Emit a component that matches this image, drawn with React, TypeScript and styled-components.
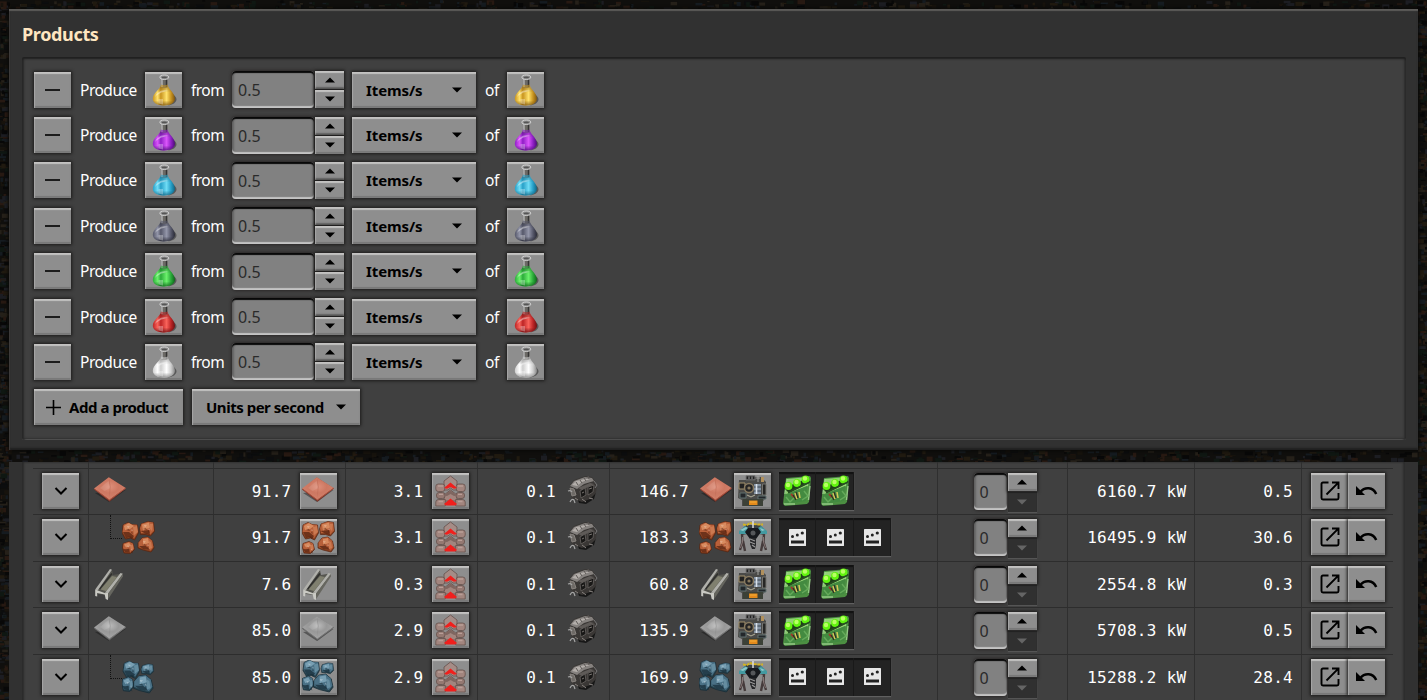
import React from "react";
import styled, { createGlobalStyle, css } from "styled-components";

const Global = createGlobalStyle`
  * { box-sizing: border-box; }
  html, body { margin: 0; padding: 0; overflow: hidden; background: #100f0d; }
  body { font-family: "Noto Sans", "Open Sans", sans-serif; font-size: 15.5px; color: #fff; }
  svg { display: block; flex: none; }
`;

const Page = styled.div`
  position: relative;
  width: 1427px;
  height: 700px;
  overflow: hidden;
  padding: 9px 9px 0;
`;

const Backdrop = styled.svg`
  position: absolute;
  inset: 0;
`;

const Panel = styled.section`
  position: relative;
  height: 441px;
  background: #313131;
  padding: 12px 12px 10px 13px;
  box-shadow: inset 0 2px 1px #5c5b59, inset 1px 0 1px #3b3938, inset 0 -2px 2px #1f1f1f, 0 0 3px 1px #090807;
`;

const Title = styled.h2`
  margin: 0;
  height: 28px;
  line-height: 27px;
  font-size: 18px;
  font-weight: 700;
  letter-spacing: -0.35px;
  color: #ffe6c0;
`;

const Inset = styled.div`
  margin-top: 8px;
  height: 383px;
  padding: 14.8px 12px 0;
  background: #404040;
  border-radius: 2px;
  box-shadow: inset 0 2px 2px #202020, inset 2px 0 2px #2b2b2b, inset -2px 0 2px #2f2f2f, inset 0 -1px 0 #6a6a6a,
    inset 0 -2px 2px #333;
`;

const ProductList = styled.div`
  display: flex;
  flex-direction: column;
  gap: 9.35px;
`;

const Row = styled.div`
  display: flex;
  align-items: center;
  height: 36px;
`;

const raised = css`
  background: #8e8e8e;
  box-shadow: inset 0 2px 1px #c3c2c1, inset 1px 0 1px #a3a3a3, inset 0 -2px 1px #777, inset -1px 0 1px #888,
    0 0 3px 1px #1c1b1a;
`;

const Button = styled.button<{ $w?: number; $flat?: boolean }>`
  ${raised}
  display: flex;
  flex: none;
  align-items: center;
  justify-content: center;
  width: ${(p) => p.$w ?? 37}px;
  height: 36px;
  padding: 0;
  border: 0;
  color: #000;
  font-family: inherit;
  font-size: 15px;
  font-weight: 700;
  letter-spacing: -0.22px;
  white-space: nowrap;
  ${(p) => p.$flat && css`background: none; box-shadow: none;`}
`;

const AddButton = styled(Button)`
  gap: 8px;
  padding-right: 3px;
  letter-spacing: -0.45px;
`;

const Label = styled.span<{ $w: number; $ls?: number }>`
  flex: none;
  width: ${(p) => p.$w}px;
  padding-left: 9px;
  letter-spacing: ${(p) => p.$ls ?? 0}px;
  line-height: 36px;
`;

const NumberField = styled.div<{ $w: number }>`
  width: ${(p) => p.$w}px;
  height: 37px;
  flex: none;
  padding-left: 6px;
  line-height: 39px;
  font-size: 16px;
  border-radius: 4px;
  background: #818181;
  color: #2a2a2a;
  box-shadow: inset 0 2px 1px #080808, inset 0 -2px 1px #c4c4c4, inset 2px 0 2px #636363, inset -1px 0 1px #666,
    0 0 3px 1px #2c2929;
`;

const Steps = styled.div`
  display: flex;
  flex-direction: column;
  gap: 1px;
  margin-left: 1px;
  width: 29px;
  flex: none;
`;

const Step = styled.button<{ $off?: boolean }>`
  ${raised}
  height: 18px;
  padding: 0;
  border: 0;
  display: flex;
  align-items: center;
  justify-content: center;
  color: ${(p) => (p.$off ? "#656565" : "#000")};
  ${(p) => p.$off && css`height: 20px; background: #303030; box-shadow: inset 0 1px 1px #222, 0 1px 1px #555;`}
`;

const Select = styled(Button)<{ $ml: number; $ls?: number }>`
  justify-content: space-between;
  margin-left: ${(p) => p.$ml}px;
  padding: 0 14px;
  letter-spacing: ${(p) => p.$ls ?? -0.1}px;
`;

const Strip = styled.div`
  position: relative;
  margin-top: 11.5px;
  height: 240px;
  padding: 0 13px;
  background: #313131;
`;

const TableArea = styled.div`
  height: 240px;
  padding: 0 12px 0 11px;
  background: #404040;
  box-shadow: inset 2px 0 2px #2b2b2b, inset -2px 0 2px #2d2d2d;
`;

const TableRow = styled.div<{ $h?: number }>`
  display: grid;
  grid-template-columns: 55.5px 125px 132px 132px 132.5px 327.5px 130px 127px 107.5px 91.5px;
  height: ${(p) => p.$h ?? 46.5}px;
  overflow: ${(p) => (p.$h ? "hidden" : "visible")};
  border-bottom: 1px solid #2d2d2d;
`;

const Cell = styled.div<{ $end?: boolean; $left?: number; $right?: number; $top?: number }>`
  position: relative;
  display: flex;
  align-items: flex-start;
  justify-content: ${(p) => (p.$end ? "flex-end" : "flex-start")};
  padding: ${(p) => p.$top ?? 4}px ${(p) => p.$right ?? 8}px 0 ${(p) => p.$left ?? 0}px;
  border-right: 1px solid #2f2f2f;
  &:last-child { border-right: 0; }
`;

const Value = styled.span<{ $w?: number; $gap?: number }>`
  font-family: "DejaVu Sans Mono", monospace;
  font-size: 16px;
  letter-spacing: 0.3px;
  line-height: 38.4px;
  margin-right: ${(p) => p.$gap ?? 8}px;
  width: ${(p) => (p.$w ? p.$w + "px" : "auto")};
  text-align: right;
  white-space: pre;
`;

const Modules = styled.div`
  display: flex;
  margin-left: 8px;
  height: 38px;
  margin-top: -1px;
  background: #232323;
  box-shadow: inset 0 2px 1px #121212, 0 1px 1px #606060;
`;

const Slot = styled.div`
  width: 37.4px;
  height: 38px;
  display: flex;
  align-items: center;
  justify-content: center;
  padding-left: 1px;
  border-right: 1px solid #191919;
`;

const Branch = styled.span`
  width: 12px;
  height: 24px;
  margin: -6px 0 0 16px;
  border-left: 1px dotted #111;
  border-bottom: 1px dotted #111;
`;

const Caret = ({ up, w = 10 }: { up?: boolean; w?: number }) => (
  <svg width={w} height="6" viewBox="0 0 10 6">
    <path d={up ? "M0 5.5 5 .5l5 5z" : "M0 .5h10l-5 5z"} fill="currentColor" />
  </svg>
);

const Chevron = () => (
  <svg width="14" height="10" viewBox="0 0 14 10">
    <path d="m1.5 2 5.5 5.5L12.500 2" fill="none" stroke="#000" strokeWidth="2" />
  </svg>
);

const OpenIcon = () => (
  <svg width="20" height="20" viewBox="0 0 20 20" fill="none" stroke="#000" strokeWidth="1.9">
    <path d="M8.500 1.500H3Q1.500 1.500 1.500 3v14q0 1.500 1.500 1.500h14q1.500 0 1.500-1.500v-5M12 1.500h6.500V8M18.300 1.700 6.500 13.500" />
  </svg>
);

const UndoIcon = () => (
  <svg width="23" height="16" viewBox="0 0 23 16">
    <path d="M1 3v9h9L6.500 8.500Z" fill="#000" />
    <path d="M5 9.200C10 3.500 18 4 21.200 11" fill="none" stroke="#000" strokeWidth="2.500" />
  </svg>
);

const tones: Record<string, [string, string, string]> = {
  gold: ["#7d5410", "#c8941f", "#ffe26c"],
  purple: ["#4c0d77", "#8f1fc6", "#da55fa"],
  cyan: ["#116482", "#27a0c8", "#6fdcf5"],
  slate: ["#292a36", "#56586a", "#9396a9"],
  green: ["#0e651b", "#2bab3a", "#6bf06b"],
  red: ["#6d1012", "#bd2425", "#f9635b"],
  white: ["#858585", "#cecece", "#ffffff"],
};

const bulb = "M12.800 11.500C12.300 15 4.800 19 4.800 24.800c0 4.200 5 6.700 11 6.700s11.200-2.500 11.200-6.700c0-5.800-6.700-9.800-7.200-13.300z";

const Flask = ({ tone }: { tone: string }) => {
  const [dark, mid, light] = tones[tone];
  return (
    <svg width="32" height="32" viewBox="0 0 32 32">
      <defs>
        <linearGradient id={"f" + tone}>
          <stop offset="0" stopColor={mid} />
          <stop offset=".22" stopColor={light} />
          <stop offset=".36" stopColor={mid} />
          <stop offset=".62" stopColor={light} />
          <stop offset=".82" stopColor={mid} />
          <stop offset="1" stopColor={dark} />
        </linearGradient>
        <linearGradient id={"s" + tone} x2="0" y2="1">
          <stop offset="0" stopColor={dark} stopOpacity=".6" />
          <stop offset=".35" stopColor={dark} stopOpacity="0" />
          <stop offset=".75" stopColor={dark} stopOpacity="0" />
          <stop offset="1" stopColor={dark} stopOpacity=".8" />
        </linearGradient>
      </defs>
      <path d="M21 18q8 4 7.500 8-1 4-8 5.500z" fill="#333" opacity=".6" />
      <path d={bulb} fill={`url(#f${tone})`} />
      <path d={bulb} fill={`url(#s${tone})`} />
      <path d="M6.800 23q1.500-3.500 6-6.200 4-1 8 .2-6 .5-9 2.500-3 1-5 3.500z" fill="#fff" opacity=".4" />
      <path d="M10.500 25h4.500v5.500q-2.500-.2-4.500-1.300z" fill="#fff" opacity=".3" />
      <path d="M12.800 4h7v9q-3.500 2-7 0z" fill="#6b6965" />
      <path d="M12.800 5h2l.2 8h-2.200z" fill="#a5a5a5" />
      <path d="M17.800 5h1.200v8h-1.200z" fill="#343434" />
      <path d="M12.800 10.500q3.500 1.500 7 0v2.800q-3.500 1.500-7 0z" fill={mid} opacity=".6" />
      <ellipse cx="16.300" cy="3.200" rx="4.400" ry="2.200" fill="#8f8f8f" stroke="#d4d4d4" strokeWidth="1" />
      <ellipse cx="16.300" cy="3.400" rx="2.700" ry=".9" fill="#555" />
    </svg>
  );
};

const Plate = ({ iron }: { iron?: boolean }) => (
  <svg width="32" height="32" viewBox="0 0 32 32">
    <defs>
      <radialGradient id={iron ? "pi" : "pc"} cx=".5" cy=".42" r=".55">
        <stop offset="0" stopColor={iron ? "#bcbcbc" : "#df907b"} />
        <stop offset=".5" stopColor={iron ? "#989898" : "#cd7862"} />
        <stop offset="1" stopColor={iron ? "#a5a5a5" : "#d1806a"} />
      </radialGradient>
    </defs>
    <path d="m1 18 14 9 16.500-12z" fill="#151515" opacity=".45" />
    <path d="m0 14.500 14.800-12L32 13.500 15.500 26.800z" fill={iron ? "#5a5a5a" : "#77352a"} />
    <path d="m0 13.600 14.800-11.400L31.700 13 15.400 25z" fill={iron ? "url(#pi)" : "url(#pc)"} />
    <path d="m15 3 2 10 14 0-14.500 0-1 11 0-11z" fill={iron ? "#707070" : "#a34e3c"} opacity=".3" />
    <path d="m6 13 8.500-7 2 7-6 3z" fill="#fff" opacity=".1" />
    <path d="M.5 14 15.400 25 31.500 13.300" fill="none" stroke={iron ? "#777" : "#a8523f"} strokeWidth="1" />
  </svg>
);

const rocks = [
  { t: "translate(0 1)", d: "M1 3 6 .5l4 2 5.500.5 1 8-4 7-4-2-5 1-3.500-6z", a: "m2 4 5-3 5 3-4 3-5 1z", b: "m11 5 4-1 1 6-4 3z", c: "m1 10 6 0 5 4-2 3-3-2-3 1z" },
  { t: "translate(17 0)", d: "M2 3 9 .5l5.500 1 1 9-4 4.500-5-1.500-5 0-1-5.500z", a: "m3 3.500 7-2 1 5-7 3z", b: "m11 3 3 0-1 7-2-2z", c: "m1.500 10 8.500-1 1 5-5-1.500z" },
  { t: "translate(0 20.500)", d: "m1 2 6-2 4 2 1.500 6-4 4-6.500-.5-1.500-5z", a: "m2 3 5-2 2 3-5 2z", b: "m8 4 3-1 0 4-2 2z", c: "m1 7.500 6 .5 1 3-5-.5z" },
  { t: "translate(16 16)", d: "M4 1 10 0l4.500 4 1.500 7-3 4-8-2-5-2 0-5z", a: "m5 2 5-1 1 5-6 2z", b: "m11 4 2 1 1 6-3 1z", c: "m1 9 7 0 4 4-7-1z" },
];

const ironPlaces = [
  "translate(1 -.5)",
  "translate(18.500 2.500) scale(.85 .75)",
  "translate(-.5 16) scale(.98 1.200)",
  "translate(11.500 14) scale(1.220 1.200)",
];

const Ore = ({ iron }: { iron?: boolean }) => {
  const c = iron ? ["#28444f", "#4a7186", "#88afc1", "#182d38"] : ["#87401f", "#b8603a", "#e39a6c", "#562310"];
  return (
    <svg width="33" height="33" viewBox="0 0 33 33">
      {rocks.map((r, i) => (
        <g key={r.t} transform={iron ? ironPlaces[i] : r.t}>
          <path d={r.d} fill={c[0]} stroke={c[3]} strokeWidth=".7" />
          <path d={r.d} fill={c[1]} transform="translate(.6 .2) scale(.93 .88)" />
          <path d={r.c} fill={c[3]} opacity=".75" />
          <path d={r.a} fill={c[2]} opacity=".75" />
          <path d={r.b} fill={c[2]} opacity=".45" />
          <path d="m5 4 3 .5-2 1.500zm5 3 1 2-2-.5z" fill="#fff" opacity=".3" />
          <path d="m4 8 3-1 1 2zm6 1 1 3-2-1z" fill={c[3]} opacity=".6" />
        </g>
      ))}
    </svg>
  );
};

const Steel = () => (
  <svg width="32" height="32" viewBox="0 0 32 32">
    <path d="m2 23 16-21 1 5 6-1 3 1L13 30l-1-3-8-1z" fill="#55554f" />
    <path d="M6.500 21.500 18 8l5 1-11 14z" fill="#80806f" />
    <path d="M5.500 21 18 5.500" stroke="#30302d" strokeWidth="1.600" />
    <path d="M1.200 21.500 16 1l2 .8L3.700 22.500z" fill="#b0b0ab" />
    <path d="M11.500 24 26.500 5l2.400.7L14.200 25.500z" fill="#b0b0aa" />
    <path d="M1.200 21.500v6.500l2 .5v-3.500l7.500 1.500 1 4.500 2.300 1V25l-2.700-.8v1l-7.500-2.700z" fill="#c9c9c3" />
    <path d="M14.200 25.500 28.900 6v2.500L14.200 31z" fill="#66665f" />
  </svg>
);

const Belt = () => (
  <svg width="31" height="32" viewBox="0 0 31 32">
    <g stroke="#65504b" strokeWidth=".8" strokeLinejoin="round">
      <path d="M9 6 15.500 1 22 6v9h-4l-2.500-2-2.500 2H9z" fill="#a58c86" />
      <rect x=".8" y="9" width="9" height="7.500" rx="2.500" fill="#a2857e" />
      <rect x="21.200" y="9" width="9" height="7.500" rx="2.500" fill="#a2857e" />
      <path d="m9 20 6.500-5 6.500 5v6H9z" fill="#a2857e" />
      <rect x="1.500" y="17.500" width="8.500" height="6" rx="2.500" fill="#957972" />
      <rect x="21" y="17.500" width="8.500" height="6" rx="2.500" fill="#957972" />
      <path d="M.8 31v-4q0-2.500 3-2.500h6.500V31zM30.200 31v-4q0-2.500-3-2.500h-6.500V31z" fill="#a2857e" />
    </g>
    <path d="M3 11h5m15 0h5M4 19.300h4m15 0h4M3.500 26.500H8m15 0h4.500" stroke="#b99e97" strokeWidth="1.300" />
    <path d="M9 13 15.500 7.500 22 13l-3 .8-3.500-1.800-3.500 1.800z" fill="#f01f1c" />
    <path d="m9 20.500 6.500-5 6.500 5-3 .5-3.500-2-3.500 2z" fill="#7f6660" />
    <path d="m9 29 6.500-5.500L22 29l-2 1.500h-9z" fill="#f01f1c" />
  </svg>
);

const Engine = () => (
  <svg width="32" height="32" viewBox="0 0 32 32">
    <path d="m9 20 3 8 7 1 8-5 2-7-3-9-10 4z" fill="#171717" />
    <path d="m3 10 4-5 11-4 7 1 3 4 2 4-1 8-6 6-8 3-5-2-5-1-2-10z" fill="#3a3735" />
    <path d="m3 11 4-5 11-4 7 1 2 3-10 3-7 5z" fill="#85817e" />
    <path d="m5 10 4-4 9-2 5 0-8 3-5 4z" fill="#b3aeaa" />
    <path d="m11 13 12-5 4 1-12 6z" fill="#5f5b58" />
    <path d="m13 16 5-3 1 7-5 3zm8-4 6-2-1 7-5 3z" fill="#191817" stroke="#625e5b" strokeWidth=".9" />
    <path d="m15 18 2-1m5-3 3-1" stroke="#77726e" />
    <path d="m9 7 2 3m2-5 2 3m2-5 2 3m2-5 1 3" stroke="#5b5754" strokeWidth="1" />
    <path d="m3 13 4 1 2 6-4 1zm5 10 3 2m4-1 4 3m3-4 4 1" fill="#6e6a66" stroke="#88837f" strokeWidth="1" />
    <path d="M1 16q3-1 4 1M3 27q2-4 4-2l1 3" fill="none" stroke="#a5a5a5" strokeWidth="1.200" />
    <path d="m27 6 3 4-2 3" fill="none" stroke="#777" />
  </svg>
);

const Furnace = () => (
  <svg width="32" height="32" viewBox="0 0 32 32">
    <path d="M2 5h7l2-3h13l5 5-1 17-3 3v4H5v-6l-4-2z" fill="#4a4a48" />
    <path d="M9 .8h9v4H9z" fill="#222" stroke="#777" />
    <path d="M12 1.500v2.500m3-2.500v2.500" stroke="#999" />
    <path d="M2 8h6v6H2z" fill="#222" stroke="#a4926d" />
    <circle cx="12" cy="13" r="4.500" fill="#252525" stroke="#887a60" strokeWidth="1.500" />
    <circle cx="12" cy="13" r="1.600" fill="#86775c" />
    <path d="M17 9h7v10h-7z" fill="#8593a3" /><path d="M17 12h7m-7 4h7" stroke="#39424d" />
    <path d="M19.500 9v10" stroke="#dae2eb" strokeWidth="1.600" />
    <path d="M24 2h3v5h-3z" fill="#b0905d" /><path d="M25.500 9h3.500v11h-3.500z" fill="#262625" stroke="#73736f" />
    <path d="M3 18h6v5H3zm18 3h8v3h-8z" fill="#23272a" stroke="#60706f" />
    <path d="M6 24h20v7H6z" fill="#3c4137" />
    <path d="M12 25.500h8.500V30H12z" fill="#e38a1c" /><path d="M13 27h6.500" stroke="#f5ae38" />
    <path d="m10 20 4 2 4-2" fill="none" stroke="#a9a592" strokeWidth="1.100" />
    <path d="M19 3h4m-2-2v6" stroke="#a3a3a0" />
  </svg>
);

const Drill = () => (
  <svg width="32" height="32" viewBox="0 0 32 32">
    <path d="m3 10 6-6h14l6 6-2 4-5-1-6 3-6-3-5 1z" fill="#3b4144" />
    <path d="m2 10 6-5 3 2-2 6-7 0zm28 0-6-5-3 2 2 6 7 0z" fill="#439aa1" />
    <path d="m3 9 6-3 2 1-5 3zm20-2 5 2-3 1z" fill="#91c5c7" />
    <path d="m6 3.500 4 .5 3-2 4 1 4 .500 5 0" fill="none" stroke="#d4b41f" strokeWidth="2" strokeDasharray="3 .8" />
    <path d="M16 0v9" stroke="#ddd" strokeWidth="1.500" />
    <path d="m11 7 10 0 3 4-5 7h-6l-5-7z" fill="#17191d" /><circle cx="16" cy="12" r="2.500" fill="#55575a" />
    <path d="M13 17h6v7l-1 4h-3l-2-5z" fill="#27282a" /><path d="m13 18 5 2m-5 1 5 2m-3 1 3 2" stroke="#999" strokeWidth="1.300" />
    <path d="m5 13 .500 8-2.500 8m3-9 2 10m19-17-.5 8 2.500 8m-3-9-2 10" fill="none" stroke="#453b3b" strokeWidth="2.400" />
    <path d="m5.500 16 0 5-2 6m23-11 0 5 2 6" fill="none" stroke="#968584" strokeWidth=".8" />
  </svg>
);

const Module = () => (
  <svg width="33" height="33" viewBox="0 0 33 33">
    <path d="m5 4 24-2 1 2-2 24-2 2-22 2-2-2z" fill="#4c8f42" />
    <path d="m6 5 22-2-1 9L5 20z" fill="#93d175" />
    <path d="m4 21 22-9-1 15-21 3z" fill="#438a40" />
    <path d="M3 30h11M6 5 4 20m25-8-1.500 14" stroke="#a6da96" strokeWidth="1.400" opacity=".8" />
    <path d="m5 23 4 5 5-5m9-6 4 5-6 4" fill="none" stroke="#65aa5a" strokeWidth="1.500" />
    <path d="m3 14 22-9 5 3-22 11z" fill="#1e3f19" />
    {[[7.5, 12], [16, 9], [24.5, 5.5]].map(([x, y]) => (
      <g key={x}>
        <circle cx={x} cy={y} r="3.900" fill="#61f40f" />
        <circle cx={x - 0.5} cy={y - 1} r="2.200" fill="#b9ff65" />
      </g>
    ))}
    <path d="m7 18.500 21-10" stroke="#274d20" strokeWidth="1.800" />
    <path d="m14 19 2 6m2-7 1 6" stroke="#d9c759" strokeWidth="1.500" />
    <path d="m10 20 3 3" stroke="#a2382a" strokeWidth="1.800" />
    <path d="m12 21 3 5m0-8 2 6" stroke="#302c20" strokeWidth="1.200" />
  </svg>
);

const EmptyModule = () => (
  <svg width="17" height="17" viewBox="0 0 17 17">
    <rect width="17" height="17" rx=".6" fill="#e7e7e7" />
    <path d="M2 11.500h13v3H2z" fill="#222" />
    <circle cx="3.500" cy="7.500" r="1.500" fill="#222" />
    <circle cx="8.300" cy="6" r="1.500" fill="#222" />
    <circle cx="13.300" cy="4" r="1.600" fill="#222" />
  </svg>
);

type Kind = "copper" | "copperOre" | "steel" | "iron" | "ironOre";
const Item = ({ kind }: { kind: Kind }) => {
  if (kind === "copper") return <Plate />;
  if (kind === "iron") return <Plate iron />;
  if (kind === "steel") return <Steel />;
  return <Ore iron={kind === "ironOre"} />;
};

const palette = ["#17130d", "#201a10", "#0c0d0e", "#151b20", "#252019", "#0f1712", "#271912", "#1c1d22", "#080808"];
let seed = 41;
const rnd = () => (seed = (seed * 16807) % 2147483647) / 2147483647;
const tile = () => ({ w: 2 + rnd() * 6, h: 1 + rnd() * 4, c: palette[Math.floor(rnd() * palette.length)] });
const speckles = [
  ...Array.from({ length: 420 }, () => ({ x: rnd() * 1427, y: rnd() * 9, ...tile() })),
  ...Array.from({ length: 700 }, () => ({ x: rnd() * 1427, y: 449 + rnd() * 13, ...tile() })),
  ...Array.from({ length: 600 }, () => ({ x: rnd() * 9 - 3, y: rnd() * 700, ...tile() })),
  ...Array.from({ length: 600 }, () => ({ x: 1417 + rnd() * 9, y: rnd() * 700, ...tile() })),
];

const products = ["gold", "purple", "cyan", "slate", "green", "red", "white"];

const rows: { kind: Kind; rate: string; belts: string; wagons: string; count: string; power: string; pollution: string; drill?: boolean }[] = [
  { kind: "copper", rate: "91.7", belts: "3.1", wagons: "0.1", count: "146.7", power: "6160.7 kW", pollution: "0.5" },
  { kind: "copperOre", rate: "91.7", belts: "3.1", wagons: "0.1", count: "183.3", power: "16495.9 kW", pollution: "30.6", drill: true },
  { kind: "steel", rate: "7.6", belts: "0.3", wagons: "0.1", count: "60.8", power: "2554.8 kW", pollution: "0.3" },
  { kind: "iron", rate: "85.0", belts: "2.9", wagons: "0.1", count: "135.9", power: "5708.3 kW", pollution: "0.5" },
  { kind: "ironOre", rate: "85.0", belts: "2.9", wagons: "0.1", count: "169.9", power: "15288.2 kW", pollution: "28.4", drill: true },
];

const Spinner = ({ locked }: { locked?: boolean }) => (
  <Steps>
    <Step><Caret up /></Step>
    <Step $off={locked}><Caret /></Step>
  </Steps>
);

export default function App() {
  return (
    <Page>
      <Global />
      <Backdrop width="1427" height="700">
        {speckles.map((s, i) => (
          <rect key={i} x={s.x} y={s.y} width={s.w} height={s.h} fill={s.c} />
        ))}
      </Backdrop>
      <Panel>
        <Title>Products</Title>
        <Inset>
          <ProductList>
            {products.map((tone) => (
              <Row key={tone}>
                <Button>
                  <svg width="15" height="2" viewBox="0 0 15 2"><path d="M0 1h15" stroke="#000" strokeWidth="1.600" /></svg>
                </Button>
                <Label $w={74} $ls={-0.5}>Produce</Label>
                <Button><Flask tone={tone} /></Button>
                <Label $w={50} $ls={-0.55}>from</Label>
                <NumberField $w={82}>0.5</NumberField>
                <Spinner />
                <Select $w={124} $ml={8}><span>Items/s</span><Caret /></Select>
                <Label $w={31} $ls={-0.5}>of</Label>
                <Button><Flask tone={tone} /></Button>
              </Row>
            ))}
            <Row>
              <AddButton $w={149}>
                <svg width="15" height="15" viewBox="0 0 15 15"><path d="M0 7.500h15M7.500 0v15" stroke="#000" strokeWidth="1.600" /></svg>
                <span>Add a product</span>
              </AddButton>
              <Select $w={168} $ml={9} $ls={-0.48}><span>Units per second</span><Caret /></Select>
            </Row>
          </ProductList>
        </Inset>
      </Panel>
      <Strip>
        <TableArea>
          <TableRow $h={7}>
            {Array.from({ length: 10 }, (_, i) => <Cell key={i} />)}
          </TableRow>
          {rows.map((r) => (
            <TableRow key={r.kind}>
              <Cell $left={9}><Button><Chevron /></Button></Cell>
              <Cell $left={5} $top={6}>
                {r.drill && <Branch />}
                <Item kind={r.kind} />
              </Cell>
              <Cell $end><Value>{r.rate}</Value><Button><Item kind={r.kind} /></Button></Cell>
              <Cell $end><Value>{r.belts}</Value><Button><Belt /></Button></Cell>
              <Cell $end><Value>{r.wagons}</Value><Button $flat><Engine /></Button></Cell>
              <Cell>
                <Value $w={79}>{r.count}</Value>
                <Button $flat><Item kind={r.kind} /></Button>
                <Button>{r.drill ? <Drill /> : <Furnace />}</Button>
                <Modules>
                  {Array.from({ length: r.drill ? 3 : 2 }, (_, i) => (
                    <Slot key={i}>{r.drill ? <EmptyModule /> : <Module />}</Slot>
                  ))}
                </Modules>
              </Cell>
              <Cell $left={36}><NumberField $w={33}>0</NumberField><Spinner locked /></Cell>
              <Cell $end><Value $gap={-1}>{r.power}</Value></Cell>
              <Cell $end><Value $gap={0}>{r.pollution}</Value></Cell>
              <Cell $left={9}><Button><OpenIcon /></Button><Button><UndoIcon /></Button></Cell>
            </TableRow>
          ))}
        </TableArea>
      </Strip>
    </Page>
  );
}
